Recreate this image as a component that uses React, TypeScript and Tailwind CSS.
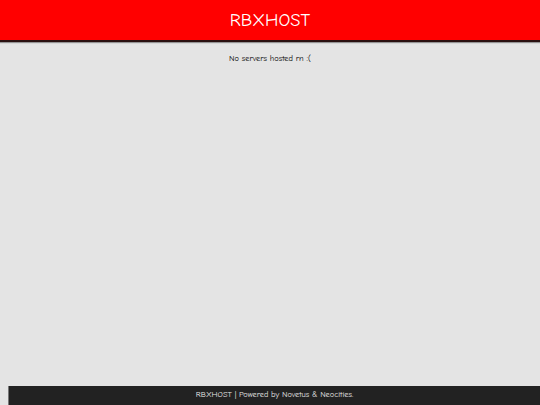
const font = { fontFamily: '"Comic Sans MS", "Comic Neue", cursive, sans-serif' }

export default function App() {
  return (
    <div className="flex h-[405px] flex-col bg-[#e4e4e4] overflow-hidden" style={font}>
      {/* Header */}
      <header className="flex h-[42px] shrink-0 items-center justify-center border-b-2 border-[#2a1010] bg-[#ff0000] shadow-[0_1px_1px_rgba(0,0,0,0.35)]">
        <h1 className="text-[18.5px] leading-none text-white">RBXHOST</h1>
      </header>

      {/* Server list */}
      <main className="flex-1 pt-[10px] text-center">
        <p className="text-[8.4px] leading-[12px] text-black">No servers hosted rn :(</p>
      </main>

      {/* Footer */}
      <footer className="ml-[8px] flex h-[19px] shrink-0 items-center justify-center border-l border-[#777] bg-[#222222]">
        <p className="text-[8.3px] leading-none text-[#e8e8e8]">RBXHOST | Powered by Novetus &amp; Neocities.</p>
      </footer>
    </div>
  )
}
